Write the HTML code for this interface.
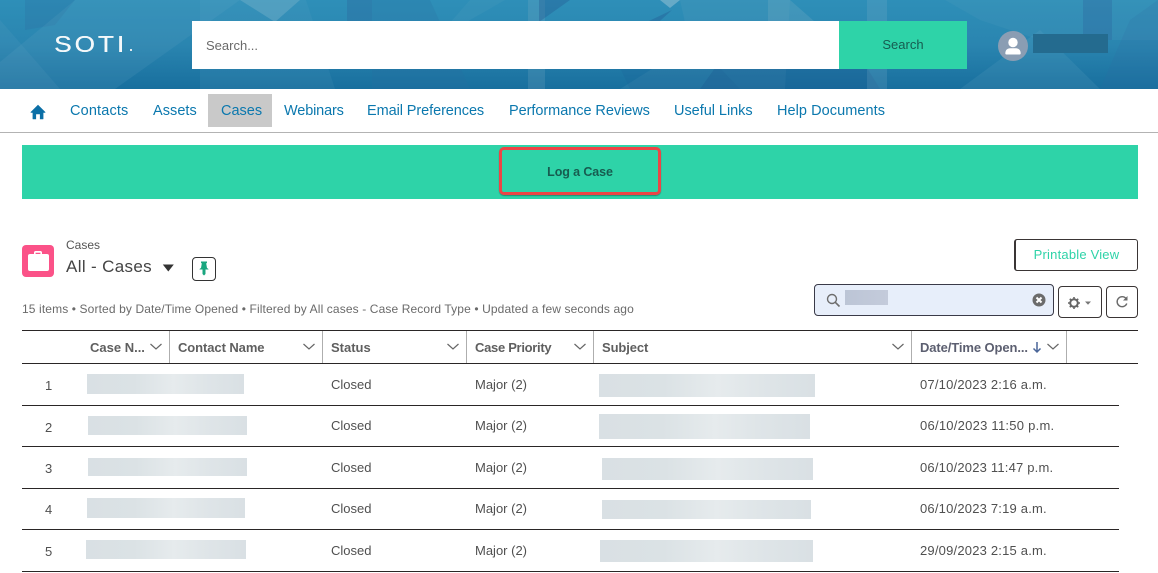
<!DOCTYPE html>
<html lang="en"><head><meta charset="utf-8"><title>Cases</title>
<style>
html,body{margin:0;padding:0;background:#fff}
body{position:relative;width:1158px;height:573px;overflow:hidden;font-family:"Liberation Sans",sans-serif;color:#444}
.a{position:absolute;white-space:nowrap}
.n{top:102px;font-size:14.5px;line-height:18px;color:#0b78ae}
.h{top:340px;font-size:13px;line-height:15px;font-weight:bold;color:#5f5f5f}
.c{font-size:13px;line-height:15px;color:#505050}
.l{position:absolute;left:22px;width:1097px;height:1px;background:#2a2626}
.s{position:absolute;top:331px;width:1px;height:32px;background:#aeaeae}
.b{position:absolute;background:linear-gradient(90deg,#d9e0e4 0%,#dbe2e5 30%,#e6ebed 55%,#dfe5e8 75%,#d9e0e4 100%)}
svg{position:absolute;display:block}
</style></head><body>

<svg style="left:0;top:0" width="1158" height="89" viewBox="0 0 1158 89">
<defs><linearGradient id="g" x1="0" y1="0" x2="0" y2="1"><stop offset="0" stop-color="#2e8fb8"/><stop offset=".5" stop-color="#2a85b0"/><stop offset="1" stop-color="#186f9e"/></linearGradient></defs>
<rect width="1158" height="89" fill="url(#g)"/>
<polygon points="25,0 75,0 55,25 25,30" fill="#2b6a9e" opacity=".25"/>
<polygon points="75,0 240,0 115,89 0,89 0,62" fill="#6aa9c4" opacity=".16"/>
<polygon points="0,20 60,89 0,89" fill="#7fb4cb" opacity=".1"/>
<polygon points="200,0 306,0 335,89 200,89" fill="#7ab3cc" opacity=".1"/>
<polygon points="240,0 300,0 275,22" fill="#a9cbd8" opacity=".25"/>
<polygon points="347,0 372,0 372,30 347,30" fill="#2a5f98" opacity=".3"/>
<polygon points="372,0 430,0 470,89 372,89" fill="#2a6fa0" opacity=".22"/>
<polygon points="470,0 505,0 435,40" fill="#6aa9c4" opacity=".12"/>
<polygon points="528,0 545,0 545,89 528,89" fill="#8ab5ca" opacity=".2"/>
<polygon points="539,0 570,0 539,22" fill="#23568f" opacity=".35"/>
<polygon points="630,30 672,10 650,30" fill="#23568f" opacity=".35"/>
<polygon points="660,0 680,0 670,8" fill="#bcd5de" opacity=".4"/>
<polygon points="680,0 790,0 785,89 620,89 690,45" fill="#6aa9c4" opacity=".15"/>
<polygon points="768,0 790,0 815,22 768,22" fill="#8ab5ca" opacity=".22"/>
<polygon points="620,68 720,68 740,89 630,89" fill="#1e5f94" opacity=".18"/>
<polygon points="735,40 850,40 880,89 700,89" fill="#1c568e" opacity=".3"/>
<polygon points="867,0 887,0 887,89 867,89" fill="#86b5cc" opacity=".2"/>
<polygon points="945,0 1158,0 1158,40 1040,40 980,20" fill="#5f9fc0" opacity=".16"/>
<polygon points="1083,0 1112,0 1112,40 1083,40" fill="#2b5f9a" opacity=".3"/>
<polygon points="1040,30 1100,89 960,89" fill="#75afca" opacity=".15"/>
<polygon points="1130,20 1158,0 1158,89 1100,89" fill="#2f6aa0" opacity=".16"/>
</svg>

<div class="a" style="left:54px;top:30px;font-size:23px;line-height:29px;color:#f4f8fa;letter-spacing:2.600px;transform-origin:left;transform:scaleX(1.14);text-shadow:.3px 0 0 #f4f8fa">SOTI</div>
<div class="a" style="left:130px;top:49px;width:1.500px;height:1.500px;background:#dfe9ee"></div>
<div class="a" style="left:192px;top:21px;width:647px;height:48px;background:#fff"></div>
<div class="a" style="left:206px;top:38px;font-size:13px;line-height:15px;color:#6a6a6a">Search...</div>
<div class="a" style="left:839px;top:21px;width:128px;height:48px;background:#2ed3a8;text-align:center;font-size:13px;line-height:47px;color:#175c50">Search</div>
<svg style="left:998px;top:31px" width="30" height="30" viewBox="0 0 30 30"><circle cx="15" cy="15" r="15" fill="#8a9db3"/><circle cx="15" cy="11.500" r="4.700" fill="#fff"/><path d="M7.300 22.500c0-3.500 2.300-5.200 4.700-5.200h6c2.400 0 4.700 1.700 4.700 5.200 0 .6-.5 1-1 1H8.300c-.5 0-1-.4-1-1z" fill="#fff"/></svg>
<div class="a" style="left:1033px;top:34px;width:75px;height:19px;background:#246b8f"></div>

<svg style="left:30px;top:104px" width="16" height="16" viewBox="0 0 16 16"><path d="M8 .8 .7 8c-.3.3-.1.7.3.7h1.600v6c0 .3.200.5.500.5h3v-5h3.800v5h3c.3 0 .5-.2.500-.5v-6H15c.4 0 .6-.4.300-.7z" fill="#0b6fa6"/></svg>
<div class="a" style="left:208px;top:94px;width:64px;height:33px;background:#c9c9c9"></div>
<div class="a n" style="left:70px;letter-spacing:.15px">Contacts</div>
<div class="a n" style="left:153px;letter-spacing:.05px">Assets</div>
<div class="a n" style="left:221px">Cases</div>
<div class="a n" style="left:284px;letter-spacing:-.15px">Webinars</div>
<div class="a n" style="left:367px;letter-spacing:-.08px">Email Preferences</div>
<div class="a n" style="left:509px;letter-spacing:-.05px">Performance Reviews</div>
<div class="a n" style="left:674px;letter-spacing:-.03px">Useful Links</div>
<div class="a n" style="left:777px;letter-spacing:.06px">Help Documents</div>
<div class="a" style="left:0;top:132px;width:1158px;height:1px;background:#b3b3b3"></div>

<div class="a" style="left:22px;top:145px;width:1116px;height:54px;background:#2ed3a8"></div>
<div class="a" style="left:499px;top:147px;width:156px;height:42px;border:3px solid #ec4546;border-radius:5px;box-shadow:0 1px 1px #1f8f74;text-align:center;font-size:12.500px;line-height:44px;font-weight:bold;letter-spacing:-.1px;color:#175c50">Log a Case</div>

<svg style="left:22px;top:245px" width="32" height="32" viewBox="0 0 32 32"><rect width="32" height="32" rx="4" fill="#fb5288"/><path d="M12 9V7.500c0-.8.700-1.500 1.500-1.500h5c.8 0 1.500.7 1.500 1.500V9h-1.600V7.700h-4.800V9z" fill="#fff"/><rect x="6" y="9" width="21" height="17" rx="2" fill="#fff"/></svg>
<div class="a" style="left:66px;top:238px;font-size:12px;line-height:15px;color:#555">Cases</div>
<div class="a" style="left:66px;top:257px;font-size:17px;line-height:20px;color:#444;letter-spacing:.35px">All - Cases</div>
<svg style="left:162px;top:264px" width="13" height="8" viewBox="0 0 13 8"><path d="M.800.500h11L6.300 7.500z" fill="#333"/></svg>
<div class="a" style="left:192px;top:257px;width:22px;height:22px;border:1px solid #333;border-radius:4px"></div>
<svg style="left:198px;top:261px" width="12" height="15" viewBox="0 0 12 15"><path d="M3 .500h6v1.300L8.200 2.500 9 7c1 .5 1.500 1 1.500 1.500h-3V13l-1.500 1.500L4.500 13V8.500h-3C1.500 8 2 7.500 3 7l.8-4.500L3 1.800z" fill="#19a67f"/></svg>

<div class="a" style="left:22px;top:302px;font-size:12px;line-height:15px;color:#6a6a6a;letter-spacing:.12px">15 items • Sorted by Date/Time Opened • Filtered by All cases - Case Record Type • Updated a few seconds ago</div>

<div class="a" style="left:1014px;top:239px;width:121px;height:30px;border:1px solid #3a3535;border-left-width:2px;border-radius:3px;text-align:center;font-size:13px;line-height:30px;letter-spacing:.2px;color:#2ed3a8">Printable View</div>
<div class="a" style="left:814px;top:284px;width:238px;height:30px;border:1px solid #3a3a48;border-radius:4px;background:#e7eefa"></div>
<svg style="left:826px;top:293px" width="15" height="15" viewBox="0 0 15 15"><circle cx="6" cy="6" r="4.500" fill="none" stroke="#6d6d6d" stroke-width="1.400"/><path d="M9.300 9.300 13.500 13.500" stroke="#6d6d6d" stroke-width="1.600"/></svg>
<div class="a" style="left:845px;top:290px;width:43px;height:15px;background:linear-gradient(90deg,#bcc5d6,#c4cbdb)"></div>
<svg style="left:1032px;top:293px" width="14" height="14" viewBox="0 0 14 14"><circle cx="7" cy="7" r="6.500" fill="#6b6b6b"/><path d="M4.500 4.500l5 5M9.500 4.500l-5 5" stroke="#fff" stroke-width="2"/></svg>
<div class="a" style="left:1058px;top:286px;width:42px;height:30px;border:1px solid #3a3535;border-radius:4px"></div>
<svg style="left:1067px;top:295px" width="26" height="15" viewBox="0 0 26 15"><circle cx="7" cy="8" r="3.800" fill="none" stroke="#666" stroke-width="2"/><path d="M7 2v2.500M7 11.500V14M1 8h2.500M10.500 8H13M2.800 3.800l1.700 1.700M9.500 10.500l1.700 1.700M2.800 12.200l1.700-1.700M9.500 5.500l1.700-1.700" stroke="#666" stroke-width="1.600"/><path d="M18 6.500h6l-3 3.300z" fill="#777"/></svg>
<div class="a" style="left:1106px;top:286px;width:30px;height:30px;border:1px solid #3a3535;border-radius:4px"></div>
<svg style="left:1115px;top:295px" width="14" height="14" viewBox="0 0 14 14"><path d="M11 3.500A5 5 0 1 0 11.800 8.500" fill="none" stroke="#6a6a6a" stroke-width="1.400"/><path d="M12.500 1v4.500H8z" fill="#6a6a6a"/></svg>

<div class="a" style="left:22px;top:330px;width:1116px;height:1px;background:#2a2626"></div>
<div class="a" style="left:22px;top:363px;width:1116px;height:1px;background:#2a2626"></div>
<div class="s" style="left:169px"></div><div class="s" style="left:322px"></div><div class="s" style="left:466px"></div><div class="s" style="left:593px"></div><div class="s" style="left:911px"></div><div class="s" style="left:1066px"></div>

<div class="a h" style="left:90px">Case N...</div>
<div class="a h" style="left:178px;letter-spacing:-.08px">Contact Name</div>
<div class="a h" style="left:331px">Status</div>
<div class="a h" style="left:475px;letter-spacing:-.3px">Case Priority</div>
<div class="a h" style="left:602px;letter-spacing:-.1px">Subject</div>
<div class="a h" style="left:920px;color:#5c5f70;letter-spacing:-.1px">Date/Time Open...</div>

<svg style="left:0;top:330px" width="1158" height="34" viewBox="0 0 1158 34" fill="none" stroke="#666" stroke-width="1.200">
<path d="M150.500 14l5.500 5 5.500-5M303.500 14l5.500 5 5.500-5M447.500 14l5.500 5 5.500-5M574.500 14l5.500 5 5.500-5M892.500 14l5.500 5 5.500-5M1047.500 14l5.500 5 5.500-5"/>
<path d="M1037 12v10M1033.500 18.500l3.500 3.500 3.500-3.500" stroke="#4a6598" stroke-width="1.500"/>
</svg>

<div class="a c" style="left:45px;top:378px">1</div>
<div class="a c" style="left:45px;top:420px">2</div>
<div class="a c" style="left:45px;top:461px">3</div>
<div class="a c" style="left:45px;top:502px">4</div>
<div class="a c" style="left:45px;top:544px">5</div>

<div class="b" style="left:87px;top:374px;width:157px;height:20px"></div>
<div class="b" style="left:88px;top:416px;width:159px;height:19px"></div>
<div class="b" style="left:88px;top:458px;width:159px;height:18px"></div>
<div class="b" style="left:87px;top:498px;width:158px;height:20px"></div>
<div class="b" style="left:86px;top:540px;width:160px;height:19px"></div>

<div class="a c" style="left:331px;top:377px">Closed</div>
<div class="a c" style="left:331px;top:418px">Closed</div>
<div class="a c" style="left:331px;top:460px">Closed</div>
<div class="a c" style="left:331px;top:501px">Closed</div>
<div class="a c" style="left:331px;top:543px">Closed</div>

<div class="a c" style="left:475px;top:377px">Major (2)</div>
<div class="a c" style="left:475px;top:418px">Major (2)</div>
<div class="a c" style="left:475px;top:460px">Major (2)</div>
<div class="a c" style="left:475px;top:501px">Major (2)</div>
<div class="a c" style="left:475px;top:543px">Major (2)</div>

<div class="b" style="left:599px;top:374px;width:216px;height:23px"></div>
<div class="b" style="left:599px;top:414px;width:211px;height:25px"></div>
<div class="b" style="left:602px;top:458px;width:211px;height:22px"></div>
<div class="b" style="left:602px;top:500px;width:209px;height:19px"></div>
<div class="b" style="left:600px;top:540px;width:213px;height:22px"></div>

<div class="a c" style="left:920px;top:377px;letter-spacing:.2px">07/10/2023 2:16 a.m.</div>
<div class="a c" style="left:920px;top:418px;letter-spacing:.25px">06/10/2023 11:50 p.m.</div>
<div class="a c" style="left:920px;top:460px;letter-spacing:.2px">06/10/2023 11:47 p.m.</div>
<div class="a c" style="left:920px;top:501px;letter-spacing:.2px">06/10/2023 7:19 a.m.</div>
<div class="a c" style="left:920px;top:543px;letter-spacing:.2px">29/09/2023 2:15 a.m.</div>

<div class="l" style="top:405px"></div>
<div class="l" style="top:446px"></div>
<div class="l" style="top:488px"></div>
<div class="l" style="top:529px"></div>
<div class="l" style="top:571px"></div>
</body></html>
